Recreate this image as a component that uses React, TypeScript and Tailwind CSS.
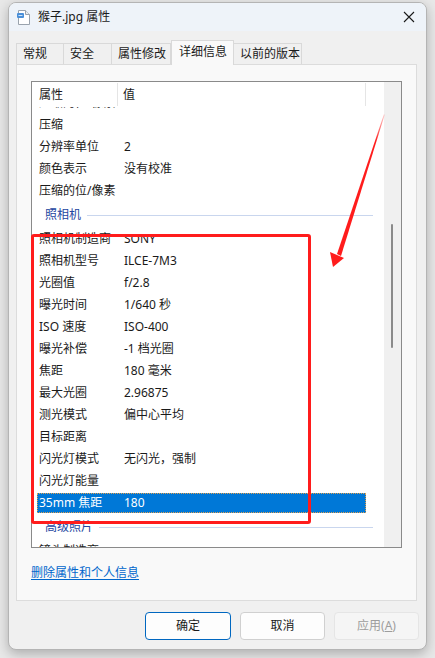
import React from 'react';

const FONT = { fontFamily: '"Noto Sans", "Noto Sans CJK SC", sans-serif' };

type Row =
  | { kind: 'row'; name: string; value?: string; selected?: boolean }
  | { kind: 'section'; name: string };

const rows: Row[] = [
  { kind: 'row', name: '压缩的位/像素', value: '24' },
  { kind: 'row', name: '压缩' },
  { kind: 'row', name: '分辨率单位', value: '2' },
  { kind: 'row', name: '颜色表示', value: '没有校准' },
  { kind: 'row', name: '压缩的位/像素' },
  { kind: 'section', name: '照相机' },
  { kind: 'row', name: '照相机制造商', value: 'SONY' },
  { kind: 'row', name: '照相机型号', value: 'ILCE-7M3' },
  { kind: 'row', name: '光圈值', value: 'f/2.8' },
  { kind: 'row', name: '曝光时间', value: '1/640 秒' },
  { kind: 'row', name: 'ISO 速度', value: 'ISO-400' },
  { kind: 'row', name: '曝光补偿', value: '-1 档光圈' },
  { kind: 'row', name: '焦距', value: '180 毫米' },
  { kind: 'row', name: '最大光圈', value: '2.96875' },
  { kind: 'row', name: '测光模式', value: '偏中心平均' },
  { kind: 'row', name: '目标距离' },
  { kind: 'row', name: '闪光灯模式', value: '无闪光，强制' },
  { kind: 'row', name: '闪光灯能量' },
  { kind: 'row', name: '35mm 焦距', value: '180', selected: true },
  { kind: 'section', name: '高级照片' },
  { kind: 'row', name: '镜头制造商', value: '' },
];

const tabs = [
  { label: '常规', w: 'w-[48px]' },
  { label: '安全', w: 'w-[48px]' },
  { label: '属性修改', w: 'w-[59px]' },
  { label: '详细信息', w: 'w-[63px]', active: true },
  { label: '以前的版本', w: 'w-[68px]' },
];

function FileIcon() {
  return (
    <svg width="13" height="15" viewBox="0 0 13 15">
      <path d="M1.5 0.5 H8.5 L12.5 4.5 V14.5 H1.5 Z" fill="#ffffff" stroke="#9aa3ad" />
      <path d="M8.5 0.5 V4.5 H12.5" fill="#e8ecf0" stroke="#9aa3ad" />
      <rect x="0" y="3" width="7" height="5" rx="1" fill="#4a8fd8" />
      <rect x="1.5" y="5" width="4" height="1" fill="#cfe3f7" />
    </svg>
  );
}

export default function App() {
  return (
    <div className="relative w-[435px] h-[658px] overflow-hidden bg-[#e8e8e8] pl-[8px] pt-[2px] text-[12px] text-[#1a1a1a]" style={FONT}>
      <div className="w-[419px] h-[648px] rounded-[8px] border border-[#b4b4b4] bg-[#f0f0f0] flex flex-col overflow-hidden shadow-[0_4px_12px_rgba(0,0,0,0.25)]">
        {/* title bar */}
        <div className="h-[28px] shrink-0 bg-[#eef3f9] flex items-center pl-[8px] pr-[9px]">
          <FileIcon />
          <span className="ml-[8px] leading-none">猴子.jpg 属性</span>
          <div className="ml-auto w-[16px] h-[16px] flex items-center justify-center">
            <svg width="12" height="12" viewBox="0 0 12 12">
              <path d="M1 1 L11 11 M11 1 L1 11" stroke="#1a1a1a" strokeWidth="1.1" />
            </svg>
          </div>
        </div>

        {/* body */}
        <div className="flex flex-col pl-[7px] pr-[9px] pt-[9px]">
          {/* tabs */}
          <div className="flex items-end h-[24px] relative z-10">
            {tabs.map(t =>
              t.active ? (
                <div
                  key={t.label}
                  className={`${t.w} h-[25px] -mb-px bg-[#f9f9f9] border border-b-0 border-[#d9d9d9] pl-[7px] pt-[2px] leading-[18px]`}
                >
                  {t.label}
                </div>
              ) : (
                <div
                  key={t.label}
                  className={`${t.w} h-[21px] bg-[#f0f0f0] border border-b-0 border-l-0 first:border-l border-[#d9d9d9] pl-[6px] pt-[1px] leading-[18px]`}
                >
                  {t.label}
                </div>
              )
            )}
          </div>

          {/* panel */}
          <div className="h-[537px] bg-[#f9f9f9] border border-[#dcdcdc] pl-[14px] pt-[16px]">
            <div className="w-[371px] h-[467px] border border-[#8a8a8a] bg-white flex">
              <div className="flex-1 flex flex-col overflow-hidden">
                {/* header */}
                <div className="h-[25px] shrink-0 flex items-center bg-white relative z-10">
                  <div className="w-[86px] h-[23px] pl-[7px] flex items-center border-r border-[#e5e5e5]">属性</div>
                  <div className="w-[248px] h-[23px] pl-[5px] flex items-center border-r border-[#e5e5e5]">值</div>
                </div>
                {/* rows */}
                <div className="flex-1 overflow-hidden">
                  <div className="-mt-[15px] pl-[5px] flex flex-col">
                    {rows.map((r, i) =>
                      r.kind === 'section' ? (
                        <div key={i} className="w-[336px] h-[26px] flex items-center pl-[8px]">
                          <span className="text-[#2446a0]">{r.name}</span>
                          <div className="flex-1 h-px bg-[#c9d6ee] ml-[6px]" />
                        </div>
                      ) : (
                        <div key={i} className="w-[329px] h-[22px] flex items-center">
                          <div
                            className={
                              r.selected
                                ? 'w-full h-[20px] flex items-center bg-[#0078d7] text-white border border-dotted border-[#e0a050]'
                                : 'w-full h-[20px] flex items-center border border-transparent'
                            }
                          >
                            <div className="w-[86px] pl-[1px] whitespace-nowrap">{r.name}</div>
                            <div className="whitespace-nowrap">{r.value}</div>
                          </div>
                        </div>
                      )
                    )}
                  </div>
                </div>
              </div>
              {/* scrollbar */}
              <div className="w-[17px] bg-[#f0f0f0] pl-[7px] pt-[142px]">
                <div className="w-[2px] h-[124px] rounded-full bg-[#8a8a8a]" />
              </div>
            </div>

            <div className="mt-[16px]">
              <span className="text-[#0066cc] underline underline-offset-2">删除属性和个人信息</span>
            </div>
          </div>

          {/* buttons */}
          <div className="mt-[11px] -mr-[2px] flex justify-end gap-[9px]">
            <button className="w-[86px] h-[28px] rounded-[4px] bg-[#fdfdfd] border border-[#0067c0] text-[#1a1a1a]">确定</button>
            <button className="w-[85px] h-[28px] rounded-[4px] bg-[#fdfdfd] border border-[#d0d0d0] text-[#1a1a1a]">取消</button>
            <button className="w-[85px] h-[28px] rounded-[4px] bg-[#f5f5f5] border border-[#e5e5e5] text-[#9d9d9d]">
              应用(<span className="underline">A</span>)
            </button>
          </div>
        </div>
      </div>

      {/* red annotation box */}
      <div className="absolute left-[31px] top-[234px] w-[280px] h-[290px] border-[3px] border-[#ff1c1c] rounded-[3px] pointer-events-none" />

      {/* red annotation arrow */}
      <svg className="absolute left-0 top-0 pointer-events-none" width="435" height="658" viewBox="0 0 435 658">
        <defs>
          <linearGradient id="fade" x1="384" y1="114" x2="340" y2="250" gradientUnits="userSpaceOnUse">
            <stop offset="0" stopColor="#ff1c1c" stopOpacity="0.2" />
            <stop offset="0.2" stopColor="#ff1c1c" stopOpacity="1" />
            <stop offset="1" stopColor="#ff1c1c" />
          </linearGradient>
        </defs>
        <path d="M384 114 L384.6 115 L341 256 L337 254 Z" fill="url(#fade)" />
        <path d="M333 267 L330 252 L344 258 Z" fill="#ff1c1c" />
      </svg>
    </div>
  );
}
